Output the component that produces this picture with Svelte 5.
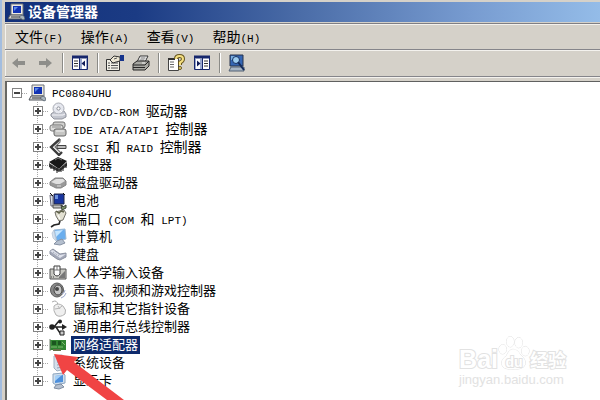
<script>
  const menus = [
    ['文件', 'F'],
    ['操作', 'A'],
    ['查看', 'V'],
    ['帮助', 'H']
  ];

  // Each label is a list of runs; Latin runs use the half-width face.
  const devices = [
    { icon: 'disc', label: ['DVD/CD-ROM ', '驱动器'] },
    { icon: 'ide', label: ['IDE ATA/ATAPI ', '控制器'] },
    { icon: 'scsi', label: ['SCSI ', '和', ' RAID ', '控制器'] },
    { icon: 'cpu', label: ['处理器'] },
    { icon: 'disk', label: ['磁盘驱动器'] },
    { icon: 'battery', label: ['电池'] },
    { icon: 'port', label: ['端口', ' (COM ', '和', ' LPT)'] },
    { icon: 'monitor', label: ['计算机'] },
    { icon: 'keyboard', label: ['键盘'] },
    { icon: 'hid', label: ['人体学输入设备'] },
    { icon: 'sound', label: ['声音、视频和游戏控制器'] },
    { icon: 'mouse', label: ['鼠标和其它指针设备'] },
    { icon: 'usb', label: ['通用串行总线控制器'] },
    { icon: 'net', label: ['网络适配器'], selected: true },
    { icon: 'system', label: ['系统设备'] },
    { icon: 'display', label: ['显示卡'] }
  ];
  const isLatin = (s) => /[A-Z]/.test(s);
</script>

{#snippet computer()}
  <path d="M4 1h12v11H4z" fill="#ece9e0" stroke="#6b7078" />
  <path d="M6 3h8v7H6z" fill="#1233b4" />
  <path d="M7 4h4L7 8z" fill="#5c8be8" />
  <path d="M3 12h12l2 4H1z" fill="#d8d8d8" stroke="#50555c" />
  <path d="M4 14h9" stroke="#303438" />
  <path d="M12 14l4 3 2-1-1-3-2-1z" fill="#a9b5bd" stroke="#4d5966" stroke-width=".7" />
{/snippet}

{#snippet deviceIcon(kind)}
  <svg class="icon" viewBox="0 0 18 18" fill="none" aria-hidden="true">
    {#if kind === 'disc'}
      <path d="M2 12l4-3h9l2 3v3l-4 2H5l-3-3z" fill="#c3c6cf" stroke="#91949e" />
      <circle cx="9.5" cy="6.500" r="5.500" fill="#e5e7ee" stroke="#a9acb5" />
      <circle cx="9.500" cy="6.500" r="1.600" fill="#fff" stroke="#8d9099" />
      <path d="M6 4l2 1M11 8l2 2" stroke="#fff" />
      <path d="M3 13h11l2-1" stroke="#f7f7fb" />
    {:else if kind === 'ide'}
      <rect x="4" y="2" width="12" height="6" rx="2" fill="#d0d0ce" stroke="#737373" />
      <rect x="1" y="5" width="13" height="6" rx="2" fill="#dededc" stroke="#777" />
      <rect x="5" y="9" width="12" height="7" rx="2" fill="#c5c5c3" stroke="#666" />
      <path d="M7 11h8" stroke="#f4f4f4" />
      <path d="M3 7h9" stroke="#8b8b8b" />
    {:else if kind === 'scsi'}
      <path d="M11 1L2 9l8 8 3-3" stroke="#3b3b3b" stroke-width="2.400" />
      <path d="M11 1v3L6 9l5 5" stroke="#777" stroke-width="1.200" />
      <path d="M8 7.500h9v3H8z" fill="#bcbcbc" stroke="#444" />
    {:else if kind === 'cpu'}
      <path d="M0 6l9-5 9 4-8 8z" fill="#171717" />
      <path d="M0 7l10 6 8-7v4l-8 6-10-5z" fill="#3d3d3d" />
      <path d="M2 9v4M5 11v4M8 12v5M12 12v4M14 10v5M17 8v4" stroke="#181818" />
      <path d="M6 4l3-2 4 2" stroke="#777" />
    {:else if kind === 'disk'}
      <path d="M1 8l5-4h8l3 3v4l-5 3H7L1 11z" fill="#999" stroke="#858585" />
      <path d="M2 8l5-3h7l2 2-5 3H7z" fill="#e0e0e0" />
      <path d="M8 12h4" stroke="#ddd" />
    {:else if kind === 'battery'}
      <path d="M1 3l3 1v10H2z" fill="#d9dfea" stroke="#667" />
      <path d="M5 2h10v10H5z" fill="#1936a0" stroke="#22284b" />
      <path d="M6 3h3v4H6z" fill="#6c91df" />
      <path d="M4 13h9l2 3H4z" fill="#c2c2c2" stroke="#555" />
      <path d="M1 1l3 3M14 1l2 2" stroke="#111" />
      <path d="M12 13l2 2 3-2v3l-4 2z" fill="#80966b" stroke="#3d4539" />
    {:else if kind === 'port'}
      <path d="M6 2l9-2 2 3-3 7-4 1-3-5z" fill="#e2e0d2" stroke="#717068" />
      <path d="M7 1l3 2 2-2 3 1" stroke="#5d6048" stroke-width="1.500" />
      <path d="M11 11l-1 3-5 1-3 2" stroke="#242424" stroke-width="1.600" />
      <path d="M9 5l2 4" stroke="#fff" />
    {:else if kind === 'monitor'}
      <path d="M5 2l11-1 1 10-9 2z" fill="#6aaeee" stroke="#9bb8d4" />
      <path d="M6 3l8-1-7 7z" fill="#c4e5ff" />
      <path d="M8 13l5-2 3 4-5 2-6-1z" fill="#b4bfce" stroke="#8691a3" />
      <path d="M3 5l2-3 2 11-3-3z" fill="#d3dfec" stroke="#a9bace" stroke-width=".6" />
    {:else if kind === 'keyboard'}
      <path d="M1 5l3-2 7 5 6-1v4l-6 3-3-1-7-5z" fill="#a3a8b8" stroke="#8c92a1" />
      <path d="M1 5l3-1 7 5 6-1-6 4z" fill="#dfe2ec" />
      <path d="M4 6l6 4M6 5l5 4" stroke="#959baa" stroke-dasharray="1 1" />
    {:else if kind === 'hid'}
      <path d="M1 5h16v10H1z" fill="#c8c8c2" stroke="#555" />
      <path d="M10 13l6-6v7h-6z" fill="#777" />
      <path d="M5 2h6v8q-3 4-6 0z" fill="#fff" stroke="#3d3d3d" />
      <path d="M5 6h6M8 2v4" stroke="#777" />
      <path d="M2 13h4" stroke="#444" stroke-dasharray="1 1" />
    {:else if kind === 'sound'}
      <ellipse cx="8" cy="8" rx="6.500" ry="7" fill="#888" stroke="#5c5c5c" />
      <ellipse cx="9" cy="8" rx="4" ry="5" fill="#c4c4c4" stroke="#444" />
      <circle cx="8" cy="7" r="2" fill="#454545" />
      <path d="M13 12q3-1 3-4M12 16q4-1 5-5" stroke="#9ca9cc" />
    {:else if kind === 'mouse'}
      <path d="M3 2q5-3 6 3" stroke="#aaa" />
      <path d="M5 6q4-4 9 0 4 4 2 8-5 4-9 1-3-4-2-9z" fill="#efefef" stroke="#b0b0b0" />
      <path d="M6 9q5 0 7-3M9 6l2 3" stroke="#b5b5b5" />
    {:else if kind === 'usb'}
      <path d="M2 9h13M5 9l4-5h3M7 9l4 6h2" stroke="#222" stroke-width="1.500" />
      <circle cx="3" cy="9" r="2.800" fill="#222" />
      <path d="M13 6l5 3-5 3z" fill="#222" />
      <circle cx="11" cy="3.500" r="2" fill="#222" />
      <path d="M11 13h4v4h-4z" fill="#ccc" stroke="#222" />
    {:else if kind === 'net'}
      <path d="M1 4h16v10H1z" fill="#318531" />
      <path d="M3 5h4v4H3zM9 5h3v4H9z" fill="#1b571f" />
      <path d="M2 11h6M13 6l3 3M9 11h5" stroke="#80bd72" />
      <path d="M4 13h8v2H4z" fill="#65714a" />
      <path d="M1 3v12" stroke="#6c7c68" />
    {:else if kind === 'system'}
      <path d="M5 2l8-1 3 2v12l-8 2-3-3z" fill="#d4dfeb" stroke="#9fb0c2" />
      <path d="M8 4l6-1v5l-6 1z" fill="#8fbce8" />
      <path d="M8 11l6-1M8 14l6-1" stroke="#93a4b8" />
    {:else if kind === 'display'}
      <path d="M4 2l10-1 2 2v8l-9 2-3-2z" fill="#cfdeec" stroke="#8da6c0" />
      <path d="M6 4l8-1v7l-8 1z" fill="#4d8fdc" />
      <path d="M6 4l7-1-7 6z" fill="#a5d0f7" />
      <path d="M7 13l5-1 3 3-5 2-5-1z" fill="#b4bfce" stroke="#7f8da2" />
    {/if}
  </svg>
{/snippet}

<div class="window">
  <header class="title">
    <svg class="icon" viewBox="0 0 18 18" aria-hidden="true">{@render computer()}</svg>
    <h1>设备管理器</h1>
  </header>

  <nav class="menubar">
    {#each menus as [name, key]}
      <button type="button">{name}<span class="latin">({key})</span></button>
    {/each}
  </nav>

  <div class="toolbar" role="toolbar" aria-label="工具栏">
    <button type="button" aria-label="后退">
      <svg viewBox="0 0 18 18"><path d="M2 9l6-5v3h7v4H8v3z" fill="#8e8e8a" /></svg>
    </button>
    <button type="button" aria-label="前进">
      <svg viewBox="0 0 18 18"><path d="M16 9l-6-5v3H3v4h7v3z" fill="#8e8e8a" /></svg>
    </button>
    <span class="sep"></span>
    <button type="button" aria-label="显示控制台树">
      <svg viewBox="0 0 18 18" fill="none">
        <path d="M1.500 2.500h15v13h-15z" fill="#fff" stroke="#17276c" />
        <path d="M1 3h16" stroke="#17276c" stroke-width="3" />
        <path d="M8.500 4v11" stroke="#17276c" />
        <path d="M9 5h2v10H9zM15 5h1v10h-1z" fill="#9aa8cf" />
        <path d="M3 7h4M3 9.500h4M3 12h4" stroke="#333" />
        <path d="M14 6.500v6L10.500 9.500z" fill="#101c58" />
      </svg>
    </button>
    <span class="sep"></span>
    <button type="button" aria-label="属性">
      <svg viewBox="0 0 18 18" fill="none">
        <path d="M.500 5.500h13v11h-13z" fill="#f2f0e6" stroke="#333" />
        <path d="M2 9h2M5 9h7M2 11.500h2M5 11.500h7M2 14h2M5 14h7" stroke="#555" />
        <path d="M4 6l4-4 6 1v4l-4 1-3 1z" fill="#eee8d5" stroke="#333" />
        <path d="M14 1h4v6h-4z" fill="#16348c" />
        <path d="M8 5l3-1" stroke="#555" />
      </svg>
    </button>
    <button type="button" aria-label="打印">
      <svg viewBox="0 0 18 18" fill="none">
        <path d="M5 8l3-6h8l-3 6z" fill="#fff" stroke="#333" />
        <path d="M8.500 4h5M7.500 6h5" stroke="#666" />
        <path d="M1 10l4-3h12v5l-4 4H1z" fill="#a7a7a2" stroke="#262626" />
        <path d="M1 11h12l4-4M1 13.500h12" stroke="#262626" />
        <path d="M10 9h3" stroke="#eee" />
      </svg>
    </button>
    <span class="sep"></span>
    <button type="button" aria-label="帮助">
      <svg viewBox="0 0 18 18" fill="none">
        <path d="M1.500 4.500h10v12h-10z" fill="#fff" stroke="#444" />
        <path d="M1 5h7" stroke="#333" stroke-width="2" />
        <path d="M3 8h4M3 10.500h4M3 13h4" stroke="#666" />
        <path d="M9 5q0-3 3.500-3T16 5q0 2-3 3.500V11" stroke="#66551d" stroke-width="4" />
        <path d="M9 5q0-3 3.500-3T16 5q0 2-3 3.500V11" stroke="#f4df81" stroke-width="2" />
        <circle cx="13" cy="14" r="1.500" fill="#f4df81" stroke="#66551d" />
      </svg>
    </button>
    <button type="button" aria-label="显示操作窗格">
      <svg viewBox="0 0 18 18" fill="none">
        <path d="M1.500 2.500h15v13h-15z" fill="#fff" stroke="#17276c" />
        <path d="M1 3h16" stroke="#17276c" stroke-width="3" />
        <path d="M9.500 4v11" stroke="#17276c" />
        <path d="M2 5h1v10H2zM7 5h2v10H7z" fill="#9aa8cf" />
        <path d="M11 7h4M11 9.500h4M11 12h4" stroke="#333" />
        <path d="M4 6.500v6l3.500-3z" fill="#101c58" />
      </svg>
    </button>
    <span class="sep"></span>
    <button type="button" aria-label="扫描检测硬件改动">
      <svg viewBox="0 0 18 18" fill="none">
        <path d="M2 1h13v11H2z" fill="#3566b4" stroke="#26324c" />
        <path d="M3 2h5v4H3z" fill="#7aaee0" />
        <circle cx="8" cy="6" r="3.500" fill="#9ecdf0" stroke="#173162" />
        <path d="M3 13h13v4H1z" fill="#a8b5c4" stroke="#536174" />
        <path d="M10 8l6 8" stroke="#142b5c" stroke-width="2" />
      </svg>
    </button>
  </div>

  <main class="pane">
    <div class="row root">
      <button type="button" class="box" aria-label="折叠"></button>
      <span class="dots"></span>
      <svg class="icon" viewBox="0 0 18 18" aria-hidden="true">{@render computer()}</svg>
      <span class="label"><span class="latin">PC0804UHU</span></span>
    </div>
    <ul>
      {#each devices as d}
        <li class="row">
          <button type="button" class="box plus" aria-label="展开"></button>
          <span class="dots"></span>
          {@render deviceIcon(d.icon)}
          <span class="label" class:mixed={d.label.length > 1} class:selected={d.selected}>{#each d.label as run}<span class:latin={isLatin(run)}>{run}</span>{/each}</span>
        </li>
      {/each}
    </ul>

    <svg class="pointer" viewBox="0 0 72 46" aria-hidden="true">
      <path d="M0 0l24 3-4 5 50 38H53L13 16l-4 5z" fill="#f04444" />
    </svg>

    <div class="watermark">
      <div class="brand">
        <span>Bai</span>
        <span class="paw">
          <svg viewBox="0 0 34 36" fill="#fff" stroke="#dedede" aria-hidden="true">
            <ellipse cx="5" cy="14" rx="4" ry="5" />
            <ellipse cx="13" cy="6" rx="4" ry="5.500" />
            <ellipse cx="22" cy="7" rx="4" ry="5.500" />
            <ellipse cx="29" cy="16" rx="4" ry="5" />
            <path d="M16 14q5 0 8 6 6 5 5 10-2 6-13 5-11 1-12-5-1-5 5-9 3-7 7-7z" />
          </svg>
          <span class="du">du</span>
        </span>
        <span class="cn">经验</span>
      </div>
      <div class="url">jingyan.baidu.com</div>
    </div>
  </main>
</div>

<style>
  :global(body) {
    margin: 0;
    background: #fff;
  }
  .window {
    box-sizing: border-box;
    min-height: 100vh;
    display: flex;
    flex-direction: column;
    border-left: 2px solid #a3bddf;
    padding: 2px 0 0 3px;
    background: #d5d1c9;
    color: #000;
    font: 14px/18px "Liberation Sans", "Noto Sans CJK SC", sans-serif;
    overflow: hidden;
  }
  button {
    padding: 0;
    border: 0;
    background: none;
    color: inherit;
    font: inherit;
  }
  svg {
    display: block;
    flex: none;
  }
  .icon {
    width: 18px;
    height: 18px;
  }
  .latin {
    font: 11px/16px "Liberation Mono", monospace;
    white-space: pre;
  }
  .title {
    display: flex;
    align-items: center;
    gap: 3px;
    height: 20px;
    padding-left: 2px;
    background: linear-gradient(90deg, #12307a 0%, #1b3b84 22%, #4b6da8 50%, #779bd0 78%, #94bce8 100%);
    color: #fff;
  }
  h1 {
    margin: 0;
    font-size: 14px;
    line-height: 18px;
    font-weight: 700;
  }
  .menubar {
    display: flex;
    align-items: center;
    gap: 18px;
    height: 24px;
    margin-top: 1px;
    padding: 1px 0 0 10px;
    border-top: 1px solid #7e7e84;
    border-bottom: 1px solid #85858a;
    box-shadow: inset 0 1px #f4f2ee, inset 1px 0 #f4f2ee;
  }
  .menubar button {
    white-space: nowrap;
  }
  .toolbar {
    display: flex;
    align-items: center;
    gap: 8px;
    height: 26px;
    padding-left: 5px;
    border-bottom: 1px solid #85858a;
    box-shadow: inset 0 1px #f4f2ee, inset 1px 0 #f4f2ee, 0 1px #f4f2ee;
  }
  .toolbar svg {
    width: 18px;
    height: 18px;
  }
  .sep {
    width: 1px;
    height: 20px;
    background: #8b8b87;
    box-shadow: 1px 0 #fff;
  }
  .pane {
    position: relative;
    flex: 1;
    margin-top: 4px;
    padding: 2px 0 8px 5px;
    border-top: 1px solid #606060;
    border-left: 2px solid #686864;
    background: #fff;
  }
  ul {
    margin: 0;
    padding: 0 0 0 21px;
    list-style: none;
  }
  .row {
    display: flex;
    align-items: center;
    height: 18px;
  }
  ul .row {
    background: repeating-linear-gradient(#a8a8a8 0 1px, transparent 1px 2px) 4px 0 / 1px 100% no-repeat;
  }
  ul .row:last-child {
    background-size: 1px 9px;
  }
  .box {
    box-sizing: border-box;
    flex: none;
    width: 10px;
    height: 10px;
    border: 1px solid #848484;
    background: linear-gradient(#444, #444) center / 6px 2px no-repeat, #fff;
  }
  .plus {
    background: linear-gradient(#444, #444) center / 6px 2px no-repeat,
      linear-gradient(#444, #444) center / 2px 6px no-repeat, #fff;
  }
  .dots {
    flex: none;
    width: 6px;
    height: 1px;
    background: repeating-linear-gradient(90deg, #a8a8a8 0 1px, transparent 1px 2px);
  }
  .label {
    margin-left: 4px;
    padding: 0 2px;
    font-size: 13px;
    line-height: 18px;
    white-space: nowrap;
  }
  .mixed {
    font-size: 14px;
  }
  .selected {
    background: #0d2a6c;
    color: #fff;
  }
  .pointer {
    position: absolute;
    left: 47px;
    bottom: 0;
    width: 72px;
    height: 46px;
  }
  .watermark {
    position: absolute;
    right: 34px;
    bottom: 13px;
    color: #fff;
    -webkit-text-stroke: 2px #e2e2e2;
    paint-order: stroke fill;
  }
  .brand {
    display: flex;
    align-items: flex-end;
    font: 700 25px/28px "Liberation Sans", sans-serif;
  }
  .paw {
    position: relative;
    width: 32px;
    height: 38px;
  }
  .paw svg {
    width: 32px;
    height: 36px;
  }
  .du {
    position: absolute;
    left: 0;
    right: 0;
    bottom: 3px;
    font-size: 14px;
    line-height: 16px;
    text-align: center;
  }
  .cn {
    font-family: "Noto Sans CJK SC", sans-serif;
    font-size: 18px;
  }
  .url {
    font: 13px/14px "Liberation Sans", sans-serif;
    -webkit-text-stroke: 0;
    color: #e2e2e2;
  }
</style>
